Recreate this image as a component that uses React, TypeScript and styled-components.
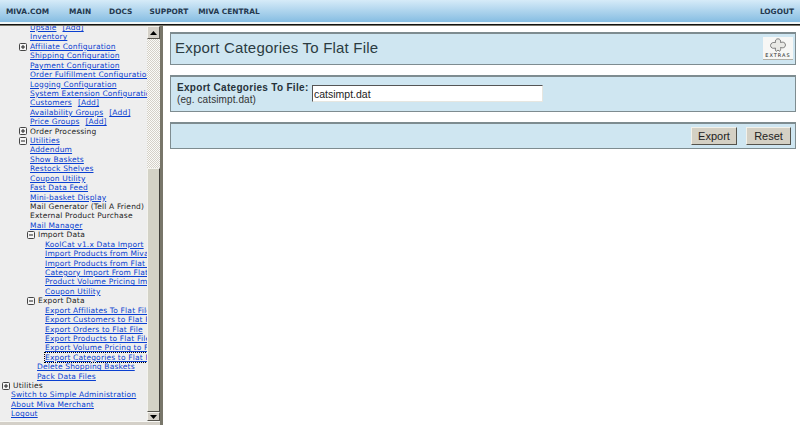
import React from "react";
import styled, { createGlobalStyle } from "styled-components";

const GlobalStyle = createGlobalStyle`
  html, body {
    margin: 0;
    height: 100%;
    overflow: hidden;
    background: #fff;
  }
  #root {
    height: 100%;
  }
`;

const Page = styled.div`
  width: 800px;
  height: 425px;
  display: flex;
  flex-direction: column;
  overflow: hidden;
`;

const TopBar = styled.div`
  height: 22px;
  display: flex;
  align-items: center;
  justify-content: space-between;
  padding: 0 6px;
  background: linear-gradient(#d6ebf8, #86bde2);
  border-bottom: 2px solid #f2f7f7;
`;

const TopLinks = styled.nav`
  display: flex;
`;

const TopLink = styled.a<{ $gap?: number }>`
  margin-left: ${(p) => p.$gap ?? 0}px;
  font: bold 7.4px "DejaVu Sans", sans-serif;
  color: #25394f;
`;

const FrameRule = styled.div`
  height: 2px;
  background: linear-gradient(#111 50%, #77756a 50%);
`;

const Body = styled.div`
  flex: 1;
  min-height: 0;
  display: flex;
`;

const Sidebar = styled.aside`
  width: 160px;
  flex: none;
  display: flex;
  flex-direction: column;
  background: #eeeeee;
`;

const SidebarMain = styled.div`
  flex: 1;
  min-height: 0;
  display: flex;
`;

const TreeClip = styled.div`
  flex: 1;
  min-width: 0;
  overflow: hidden;
`;

const Tree = styled.ul`
  list-style: none;
  margin: -3px 0 0;
  padding: 0;
  font: 7.5px/9.425px "DejaVu Sans", sans-serif;
  letter-spacing: 0.17px;
  color: #222;
`;

const Row = styled.li<{ $indent: number }>`
  height: 9.425px;
  display: flex;
  align-items: center;
  white-space: nowrap;
  padding-left: ${(p) => p.$indent}px;
`;

const TreeLink = styled.a<{ $focused?: boolean }>`
  color: #0a3fd0;
  text-decoration: underline;
  ${(p) => p.$focused && "outline: 1px dotted #000; outline-offset: 0;"}
`;

const AddLink = styled(TreeLink)`
  margin-left: 6px;
`;

const Toggle = styled.span`
  width: 8px;
  height: 8px;
  flex: none;
  margin-right: 3px;
  display: flex;
`;

const Scrollbar = styled.div`
  width: 13px;
  flex: none;
  display: flex;
  flex-direction: column;
  background: repeating-conic-gradient(#d4d0c8 0 25%, #fbfbf8 0 50%) 0 0 / 2px 2px;
`;

const ScrollButton = styled.div<{ $height: number }>`
  height: ${(p) => p.$height}px;
  flex: none;
  display: flex;
  align-items: center;
  justify-content: center;
  box-sizing: border-box;
  background: #d4d0c8;
  border: 1px solid;
  border-color: #f4f3ee #55534c #55534c #f4f3ee;
`;

const Track = styled.div`
  height: 129px;
  flex: none;
`;

const Thumb = styled.div`
  flex: 1;
  background: #d3d2c6;
  border: 1px solid;
  border-color: #f4f3ee #403f3a #55534c #f4f3ee;
`;

const BottomEdge = styled.div`
  height: 3px;
  flex: none;
  background: #d4d0c8;
  border-top: 1px solid #f8f8f4;
`;

const FrameBorder = styled.div`
  width: 3px;
  flex: none;
  background: #78766a;
`;

const Content = styled.main`
  flex: 1;
  min-width: 0;
  display: flex;
  flex-direction: column;
  gap: 10px;
  padding: 6px 4px 0 7px;
  background: #fff;
`;

const Panel = styled.section<{ $height: number }>`
  height: ${(p) => p.$height}px;
  box-sizing: border-box;
  display: flex;
  align-items: center;
  justify-content: space-between;
  background: #cfe6f1;
  border: 1px solid #7e8c90;
  border-top-width: 2px;
`;

const Title = styled.h1`
  margin: 0 0 3px 4px;
  font: 400 15px "Liberation Sans", sans-serif;
  letter-spacing: 0.2px;
  color: #2b3c42;
`;

const ExtrasBadge = styled.div`
  width: 30px;
  height: 22px;
  margin: 0 2px 1px 0;
  display: flex;
  flex-direction: column;
  align-items: center;
  justify-content: center;
  background: #f7f7f5;
  border-bottom: 1px solid #b0b0a8;
`;

const ExtrasText = styled.span`
  font: 5px/6px "DejaVu Sans", sans-serif;
  letter-spacing: 1px;
  color: #222;
`;

const FieldRow = styled.div`
  display: flex;
  align-items: flex-start;
  gap: 6px;
  padding-left: 6px;
`;

const FieldLabel = styled.label`
  display: flex;
  flex-direction: column;
  width: 129px;
  font: 10px/12px "Liberation Sans", sans-serif;
  letter-spacing: 0.1px;
  color: #333;
`;

const FieldName = styled.strong`
  font-weight: 700;
  letter-spacing: 0.3px;
  color: #26323a;
  white-space: nowrap;
`;

const TextInput = styled.input`
  width: 231px;
  height: 17px;
  box-sizing: border-box;
  margin: 3px 0 0;
  padding: 0 1px;
  font: 10.5px "Liberation Sans", sans-serif;
  color: #222;
  background: #fff;
  border: 1px solid;
  border-color: #555 #e6e6e0 #e6e6e0 #555;
  outline: none;
`;

const Actions = styled.div`
  margin-left: auto;
  display: flex;
  gap: 9px;
  padding-right: 4px;
`;

const Button = styled.button<{ $width: number }>`
  width: ${(p) => p.$width}px;
  height: 18px;
  padding: 0;
  font: 11px "Liberation Sans", sans-serif;
  color: #222;
  background: #d4d0c4;
  border: 1px solid;
  border-color: #f2f1ea #55534c #55534c #f2f1ea;
`;

type TreeItem = {
  label: string;
  indent: number;
  toggle?: "plus" | "minus";
  plain?: boolean;
  add?: boolean;
  focused?: boolean;
};

// x positions of the tree levels: 11, 30, 37, 45
const treeItems: TreeItem[] = [
  { label: "Upsale", indent: 30, add: true },
  { label: "Inventory", indent: 30 },
  { label: "Affiliate Configuration", indent: 19, toggle: "plus" },
  { label: "Shipping Configuration", indent: 30 },
  { label: "Payment Configuration", indent: 30 },
  { label: "Order Fulfillment Configuration", indent: 30 },
  { label: "Logging Configuration", indent: 30 },
  { label: "System Extension Configuration", indent: 30 },
  { label: "Customers", indent: 30, add: true },
  { label: "Availability Groups", indent: 30, add: true },
  { label: "Price Groups", indent: 30, add: true },
  { label: "Order Processing", indent: 19, toggle: "plus", plain: true },
  { label: "Utilities", indent: 19, toggle: "minus" },
  { label: "Addendum", indent: 30 },
  { label: "Show Baskets", indent: 30 },
  { label: "Restock Shelves", indent: 30 },
  { label: "Coupon Utility", indent: 30 },
  { label: "Fast Data Feed", indent: 30 },
  { label: "Mini-basket Display", indent: 30 },
  { label: "Mail Generator (Tell A Friend)", indent: 30, plain: true },
  { label: "External Product Purchase", indent: 30, plain: true },
  { label: "Mail Manager", indent: 30 },
  { label: "Import Data", indent: 27, toggle: "minus", plain: true },
  { label: "KoolCat v1.x Data Import", indent: 45 },
  { label: "Import Products from Miva", indent: 45 },
  { label: "Import Products from Flat File", indent: 45 },
  { label: "Category Import From Flat File", indent: 45 },
  { label: "Product Volume Pricing Import", indent: 45 },
  { label: "Coupon Utility", indent: 45 },
  { label: "Export Data", indent: 27, toggle: "minus", plain: true },
  { label: "Export Affiliates To Flat File", indent: 45 },
  { label: "Export Customers to Flat File", indent: 45 },
  { label: "Export Orders to Flat File", indent: 45 },
  { label: "Export Products to Flat File", indent: 45 },
  { label: "Export Volume Pricing to Flat", indent: 45 },
  { label: "Export Categories to Flat File", indent: 45, focused: true },
  { label: "Delete Shopping Baskets", indent: 37 },
  { label: "Pack Data Files", indent: 37 },
  { label: "Utilities", indent: 2, toggle: "plus", plain: true },
  { label: "Switch to Simple Administration", indent: 11 },
  { label: "About Miva Merchant", indent: 11 },
  { label: "Logout", indent: 11 },
];

function ToggleIcon({ kind }: { kind: "plus" | "minus" }) {
  return (
    <Toggle>
      <svg width="8" height="8" viewBox="0 0 8 8">
        <rect x="0.5" y="0.5" width="7" height="7" rx="1" fill="#f4f4f4" stroke="#444" />
        <path d="M2 4h4" stroke="#222" />
        {kind === "plus" && <path d="M4 2v4" stroke="#222" />}
      </svg>
    </Toggle>
  );
}

function PuzzleIcon() {
  return (
    <svg width="18" height="14" viewBox="0 0 18 14">
      <path
        d="M6.5 4.5C6 2.5 7 .8 9 .8s3 1.700 2.500 3.700c2-.9 5-.3 5 2.500s-3 3.300-5 2.500c.4 1 .2 3.700-1.200 3.700l-1.300-1.200-1.300 1.200C6.300 13.700 6.100 11 6.500 10c-2 .8-5 .3-5-2.500s3-3.400 5-3z"
        fill="#e9e9e5"
        stroke="#666"
        strokeWidth="0.8"
      />
    </svg>
  );
}

function App() {
  return (
    <Page>
      <GlobalStyle />
      <TopBar>
        <TopLinks>
          <TopLink>MIVA.COM</TopLink>
          <TopLink $gap={20}>MAIN</TopLink>
          <TopLink $gap={18}>DOCS</TopLink>
          <TopLink $gap={17}>SUPPORT</TopLink>
          <TopLink $gap={10}>MIVA CENTRAL</TopLink>
        </TopLinks>
        <TopLink>LOGOUT</TopLink>
      </TopBar>
      <FrameRule />
      <Body>
        <Sidebar>
          <SidebarMain>
            <TreeClip>
              <Tree>
                {treeItems.map((item, i) => (
                  <Row key={i} $indent={item.indent}>
                    {item.toggle && <ToggleIcon kind={item.toggle} />}
                    {item.plain ? (
                      item.label
                    ) : (
                      <TreeLink $focused={item.focused}>{item.label}</TreeLink>
                    )}
                    {item.add && <AddLink>[Add]</AddLink>}
                  </Row>
                ))}
              </Tree>
            </TreeClip>
            <Scrollbar>
              <ScrollButton $height={13}>
                <svg width="7" height="4" viewBox="0 0 7 4">
                  <path d="M3.5 0L7 4H0z" fill="#000" />
                </svg>
              </ScrollButton>
              <Track />
              <Thumb />
              <ScrollButton $height={9}>
                <svg width="7" height="4" viewBox="0 0 7 4">
                  <path d="M0 0h7L3.5 4z" fill="#000" />
                </svg>
              </ScrollButton>
            </Scrollbar>
          </SidebarMain>
          <BottomEdge />
        </Sidebar>
        <FrameBorder />
        <Content>
          <Panel $height={33}>
            <Title>Export Categories To Flat File</Title>
            <ExtrasBadge>
              <PuzzleIcon />
              <ExtrasText>EXTRAS</ExtrasText>
            </ExtrasBadge>
          </Panel>
          <Panel $height={37}>
            <FieldRow>
              <FieldLabel>
                <FieldName>Export Categories To File:</FieldName>
                (eg. catsimpt.dat)
              </FieldLabel>
              <TextInput defaultValue="catsimpt.dat" />
            </FieldRow>
          </Panel>
          <Panel $height={27}>
            <Actions>
              <Button $width={46}>Export</Button>
              <Button $width={45}>Reset</Button>
            </Actions>
          </Panel>
        </Content>
      </Body>
    </Page>
  );
}

export default App;
